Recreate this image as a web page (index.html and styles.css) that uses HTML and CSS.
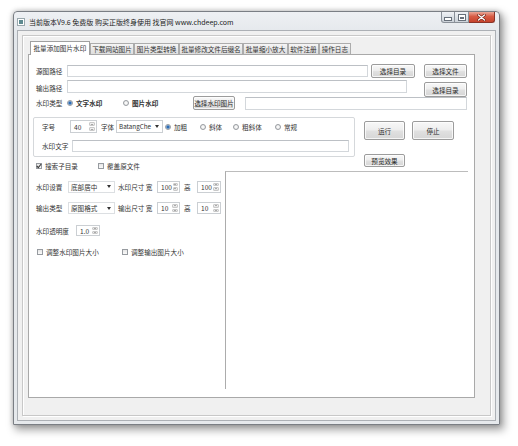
FILE: index.html
```html
<!DOCTYPE html>
<html>
<head>
<meta charset="utf-8">
<title>当前版本V9.6</title>
<link rel="stylesheet" href="styles.css">
</head>
<body>
<div class="window">
  <div class="titlebar">
    <span class="appicon"></span>
    <span class="title">当前版本V9.6 免费版 购买正版终身使用 找官网 www.chdeep.com</span>
    <div class="caption">
      <span class="cbtn min"><i></i></span>
      <span class="cbtn max"><i></i></span>
      <span class="cbtn close"><svg width="9" height="7" viewBox="0 0 9 7"><path d="M1.5 1 L7.5 6 M7.5 1 L1.5 6" stroke="#6a2216" stroke-width="2.6" stroke-linecap="round"/><path d="M1.5 1 L7.5 6 M7.5 1 L1.5 6" stroke="#fff" stroke-width="1.4" stroke-linecap="round"/></svg></span>
    </div>
  </div>
  <div class="client">
    <div class="panel">
      <div class="tabs">
        <div class="tabstrip">
          <span class="tab active">批量添加图片水印</span>
          <span class="tab">下载网站图片</span>
          <span class="tab">图片类型转换</span>
          <span class="tab">批量修改文件后缀名</span>
          <span class="tab">批量缩小放大</span>
          <span class="tab">软件注册</span>
          <span class="tab">操作日志</span>
        </div>
        <div class="page">
          <div class="row r1">
            <span class="lbl">源图路径</span>
            <span class="input src"></span>
            <span class="btn b-dir1">选择目录</span>
            <span class="btn b-file">选择文件</span>
          </div>
          <div class="row r2">
            <span class="lbl lbl-top">输出路径</span>
            <span class="input out"></span>
            <span class="btn b-dir2">选择目录</span>
          </div>
          <div class="row r3">
            <span class="lbl">水印类型</span>
            <span class="opt o-text"><span class="radio on"></span><span class="bold">文字水印</span></span>
            <span class="opt o-img"><span class="radio"></span><span class="bold">图片水印</span></span>
            <span class="btn b-wm">选择水印图片</span>
            <span class="input wmimg"></span>
          </div>

          <div class="sec-a">
            <div class="left-a">
              <div class="group">
                <div class="row g1">
                  <span class="glbl gl-size">字号</span>
                  <span class="spin s-size"><span class="val">40</span><span class="arr"><i class="up"></i><i class="dn"></i></span></span>
                  <span class="glbl gl-font">字体</span>
                  <span class="combo c-font"><span>BatangChe</span><span class="caret"></span></span>
                  <span class="opt o-bold"><span class="radio on"></span><span>加粗</span></span>
                  <span class="opt o-ital"><span class="radio"></span><span>斜体</span></span>
                  <span class="opt o-bi"><span class="radio"></span><span>粗斜体</span></span>
                  <span class="opt"><span class="radio"></span><span>常规</span></span>
                </div>
                <div class="row g2">
                  <span class="glbl gl-text">水印文字</span>
                  <span class="input wmtext"></span>
                </div>
              </div>
              <div class="row chkrow">
                <span class="opt o-sub"><span class="chk on"><svg width="6" height="6" viewBox="0 0 6 6"><path d="M0.8 3 L2.3 4.6 L5.2 1" fill="none" stroke="#3a3a3a" stroke-width="1.1"/></svg></span><span>搜索子目录</span></span>
                <span class="opt"><span class="chk"></span><span>覆盖原文件</span></span>
              </div>
            </div>
            <div class="right-a">
              <div class="runrow">
                <span class="btn b-run">运行</span>
                <span class="btn b-stop">停止</span>
              </div>
              <span class="btn b-prev">预览效果</span>
            </div>
          </div>

          <div class="sec-b">
            <div class="left-b">
              <div class="lrow lr1">
                <span class="l32">水印设置</span>
                <span class="combo c47"><span>底部居中</span><span class="caret"></span></span>
                <span class="dim">水印尺寸 宽</span>
                <span class="spin s23"><span class="val">100</span><span class="arr"><i class="up"></i><i class="dn"></i></span></span>
                <span class="high">高</span>
                <span class="spin s24"><span class="val">100</span><span class="arr"><i class="up"></i><i class="dn"></i></span></span>
              </div>
              <div class="lrow lr2">
                <span class="l32">输出类型</span>
                <span class="combo c47"><span>原图格式</span><span class="caret"></span></span>
                <span class="dim">输出尺寸 宽</span>
                <span class="spin s23"><span class="val">10</span><span class="arr"><i class="up"></i><i class="dn"></i></span></span>
                <span class="high">高</span>
                <span class="spin s24"><span class="val">10</span><span class="arr"><i class="up"></i><i class="dn"></i></span></span>
              </div>
              <div class="lrow lr3">
                <span class="l40">水印透明度</span>
                <span class="spin s-op"><span class="val">1.0</span><span class="arr"><i class="up"></i><i class="dn"></i></span></span>
              </div>
              <div class="lrow lr4">
                <span class="opt o-rs"><span class="chk"></span><span>调整水印图片大小</span></span>
                <span class="opt"><span class="chk"></span><span>调整输出图片大小</span></span>
              </div>
            </div>
            <div class="preview"></div>
          </div>
        </div>
      </div>
    </div>
  </div>
</div>
</body>
</html>
```
FILE: styles.css
```css
* { box-sizing: border-box; }
html, body { margin: 0; padding: 0; }
body {
  width: 518px;
  height: 446px;
  overflow: hidden;
  background: #fff;
  font-family: "Noto Sans CJK SC", "Noto Sans", sans-serif;
  font-size: 6.6px;
  color: #333;
}

/* window frame */
.window {
  margin: 11px 0 0 13px;
  width: 487px;
  height: 414px;
  border: 1px solid #7a7e84;
  border-radius: 4px 4px 0 0;
  background: linear-gradient(#eef0f3, #e3e7eb 24px, #e6e9ec);
  padding: 0 3px 3px;
  display: flex;
  flex-direction: column;
  box-shadow: 3px 4px 9px 1px rgba(0,0,0,.36), 0 0 5px rgba(0,0,0,.22);
}
.titlebar {
  height: 18px;
  flex: none;
  display: flex;
  align-items: center;
}
.appicon {
  width: 6px;
  height: 6px;
  margin: 1px 5px 0 1px;
  border: 1px solid #fff;
  background: #5d8a90;
  box-shadow: 0 0 0 1px #9aa8ad;
  flex: none;
}
.title {
  font-size: 7px;
  color: #222;
  white-space: nowrap;
  padding-top: 1px;
}
.caption {
  margin-left: auto;
  margin-right: 1px;
  align-self: flex-start;
  display: flex;
  height: 11px;
}
.cbtn {
  height: 11px;
  display: flex;
  align-items: center;
  justify-content: center;
  border: 1px solid #8a9098;
  border-top: none;
}
.min {
  width: 14px;
  border-radius: 0 0 0 3px;
  background: linear-gradient(#f0f2f5, #dde2e7 50%, #ccd2d9);
}
.max {
  width: 14px;
  border-left: none;
  background: linear-gradient(#f0f2f5, #dde2e7 50%, #ccd2d9);
}
.close {
  width: 26px;
  border-left: none;
  border-color: #8a3428;
  border-radius: 0 0 3px 0;
  background: linear-gradient(#eaa898, #d75c45 45%, #c6432c);
}
.min i {
  display: block;
  width: 6px;
  height: 2px;
  margin-top: 3px;
  background: #fff;
  box-shadow: 0 0 0 1px #68707a;
}
.max i {
  display: block;
  width: 6px;
  height: 5px;
  border: 1px solid #fff;
  border-top-width: 2px;
  box-shadow: 0 0 0 1px #68707a, inset 0 0 0 1px #68707a;
}

/* client area */
.client {
  flex: 1;
  background: #f0f0f0;
  border: 1px solid #acb0b5;
  padding: 4px;
  display: flex;
  flex-direction: column;
}
.panel {
  flex: 1;
  width: 469px;
  border: 1px solid #c8c8c8;
  box-shadow: inset 1px 1px 0 #fff, 1px 1px 0 #fff;
  padding: 4px;
}
.tabs { width: 448px; }
.tabstrip {
  height: 14px;
  display: flex;
  align-items: flex-end;
  padding-left: 3px;
}
.tab {
  height: 11px;
  padding: 0 1.5px;
  border: 1px solid #acacac;
  border-bottom: none;
  background: linear-gradient(#f5f5f5, #e9e9e9 50%, #dedede);
  line-height: 10px;
  white-space: nowrap;
}
.tab.active {
  height: 14px;
  margin-bottom: -1px;
  padding: 0 2.5px;
  border-color: #a0a0a0;
  background: #fff;
  line-height: 12px;
  position: relative;
  z-index: 1;
}
.page {
  margin-left: 1px;
  width: 447px;
  height: 344px;
  border: 1px solid #a9a9a9;
  background: #fff;
  padding: 9px 0 0 4px;
}

/* generic widgets */
.row { display: flex; align-items: center; white-space: nowrap; }
.lbl { flex: none; width: 34px; padding-left: 3px; }
.lbl-top { margin-top: 3px; }
.input {
  flex: none;
  display: block;
  background: #fff;
  border: 1px solid #d3d7db;
  border-top-color: #bcc0c5;
}
.btn {
  flex: none;
  display: flex;
  align-items: center;
  justify-content: center;
  border: 1px solid #9c9c9c;
  border-radius: 2px;
  background: linear-gradient(#f8f8f8, #eeeeee 45%, #e0e0e0 55%, #d6d6d6);
  box-shadow: inset 0 0 0 1px rgba(255,255,255,.75);
  color: #2a2a2a;
  white-space: nowrap;
}
.opt { flex: none; display: flex; align-items: center; gap: 3px; }
.bold { font-weight: 700; }
.radio {
  flex: none;
  width: 6px;
  height: 6px;
  border-radius: 50%;
  border: 1px solid #979ba0;
  background: radial-gradient(circle, #fff 0, #e2e2e2 100%);
}
.radio.on {
  background: radial-gradient(circle, #2360a8 0, #3472ba 1.1px, #93bbe3 1.9px, #eef2f6 2.6px);
}
.chk {
  flex: none;
  width: 6px;
  height: 6px;
  border: 1px solid #979ba0;
  background: linear-gradient(#e6e6e6, #fafafa);
  display: flex;
  align-items: center;
  justify-content: center;
}
.chk svg { display: block; flex: none; }
.spin {
  flex: none;
  display: flex;
  border: 1px solid #cbcfd3;
  background: #fff;
}
.spin .val { flex: 1; padding-left: 3px; display: flex; align-items: center; }
.spin .arr {
  width: 8px;
  display: flex;
  flex-direction: column;
  gap: 1px;
  padding: 1px;
}
.arr i {
  flex: 1;
  display: flex;
  align-items: center;
  justify-content: center;
  background: linear-gradient(#f5f5f5, #e0e0e0);
  border: 1px solid #c9c9c9;
  border-radius: 1px;
}
.arr i::before {
  content: "";
  border-left: 1.5px solid transparent;
  border-right: 1.5px solid transparent;
}
.arr i.up::before { border-bottom: 1.5px solid #666; }
.arr i.dn::before { border-top: 1.5px solid #666; }
.combo {
  flex: none;
  display: flex;
  align-items: center;
  justify-content: space-between;
  padding: 0 3px 0 2px;
  border: 1px solid #cbcfd3;
  background: #fff;
}
.caret {
  flex: none;
  width: 0;
  height: 0;
  margin-left: 2px;
  border-left: 2.5px solid transparent;
  border-right: 2.5px solid transparent;
  border-top: 3px solid #333;
}

/* row 1 */
.r1 { height: 14px; }
.src { width: 301px; height: 12px; }
.b-dir1 { width: 44px; height: 14px; margin-left: 3px; }
.b-file { width: 43px; height: 14px; margin-left: 9px; }

/* row 2 */
.r2 { height: 16px; margin-top: 2px; align-items: flex-start; }
.out { width: 340px; height: 13px; }
.b-dir2 { width: 43px; height: 15px; margin-top: 2px; margin-left: 17px; }

/* row 3 */
.r3 { height: 14px; }
.o-text { width: 56px; }
.o-img { width: 70px; }
.b-wm { width: 42px; height: 14px; }
.wmimg { width: 222px; height: 13px; margin-left: 10px; }

/* section with group box */
.sec-a { display: flex; margin-top: 7px; }
.left-a { width: 322px; flex: none; }
.group {
  height: 40px;
  border: 1px solid #d5d8db;
  border-radius: 2px;
  padding: 2px 0 0 8px;
}
.g1 { height: 13px; }
.glbl { flex: none; }
.gl-size { width: 28px; }
.s-size { width: 27px; height: 13px; }
.gl-font { width: 15px; margin-left: 4px; }
.c-font { width: 47px; height: 13px; font-size: 6.3px; }
.o-bold { width: 35px; margin-left: 2px; }
.o-ital { width: 33px; }
.o-bi { width: 42px; }
.g2 { height: 12px; margin-top: 7px; }
.gl-text { width: 30px; }
.wmtext { width: 277px; height: 12px; }
.chkrow { height: 12px; margin-top: 3px; padding-left: 3px; }
.o-sub { width: 62px; }
.right-a {
  margin-left: 9px;
  padding-top: 4px;
  display: flex;
  flex-direction: column;
  align-items: flex-start;
}
.runrow { display: flex; }
.b-run { width: 41px; height: 19px; }
.b-stop { width: 42px; height: 19px; margin-left: 7px; }
.b-prev { width: 41px; height: 13px; margin-top: 14px; }

/* lower section */
.sec-b { display: flex; }
.left-b { width: 192px; flex: none; padding-left: 3px; }
.lrow { display: flex; align-items: center; white-space: nowrap; }
.lr1 { height: 13px; margin-top: 8px; }
.lr2 { height: 12px; margin-top: 9px; }
.lr3 { height: 11px; margin-top: 11px; }
.lr4 { height: 11px; margin-top: 10px; padding-left: 1px; }
.l32 { width: 32px; flex: none; }
.l40 { width: 40px; flex: none; }
.c47 { width: 47px; height: 12px; border-color: #dcdfe2; }
.dim { width: 39px; margin-left: 3px; flex: none; }
.s23 { width: 23px; height: 12px; }
.high { width: 13px; margin-left: 4px; flex: none; }
.s24 { width: 24px; height: 12px; }
.s-op { width: 24px; height: 11px; }
.o-rs { width: 85px; }
.preview {
  flex: none;
  width: 243px;
  height: 218px;
  margin-top: -1px;
  border-top: 1px solid #bcbcbc;
  border-left: 1px solid #acacac;
}
```
